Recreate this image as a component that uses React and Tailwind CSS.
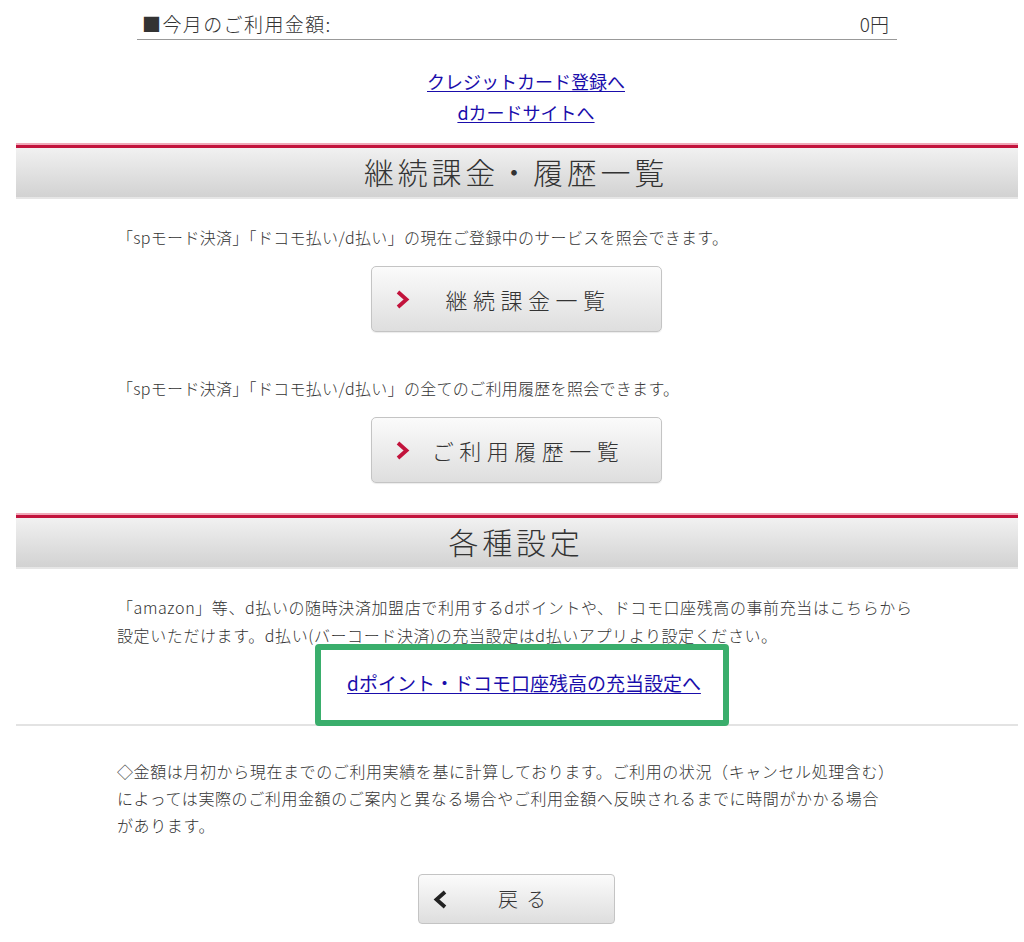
import React from "react";

const jp = { fontFamily: '"Noto Sans CJK JP", "Noto Sans", sans-serif' };

// 見出しバー（赤線＋グレーのグラデーション）
const SectionHeader = ({ title }) => (
    <div className="mx-4 mr-[6px]">
        <div className="h-[2px] bg-[#f0a8b8]" />
        <div className="h-[3px] bg-[#c2133c]" />
        <div className="h-[49px] bg-gradient-to-b from-[#f1f1f1] to-[#d2d2d2] flex items-center justify-center">
            <h2 className="text-[30px] leading-none text-[#333] font-light tracking-[3.8px] pb-[4px] pr-[2px]">{title}</h2>
        </div>
        <div className="h-[2px] bg-[#e6e6e6]" />
    </div>
);

const Chevron = ({ dir = "right", color }) => (
    <svg width="15" height="19" viewBox="0 0 15 19" className="shrink-0">
        <path
            d={dir === "right" ? "M3 2 L11.5 9.5 L3 17" : "M12 2 L3.5 9.5 L12 17"}
            fill="none"
            stroke={color}
            strokeWidth="3.8"
            strokeLinejoin="miter"
        />
    </svg>
);

const GrayButton = ({ label }) => (
    <div className="flex justify-center pl-[8px]">
        <button className="w-[291px] h-[66px] rounded-[5px] border border-[#c4c4c4] bg-gradient-to-b from-[#fbfbfb] to-[#dedede] flex items-center pl-[23px] shadow-[0_1px_1px_rgba(0,0,0,0.08)]">
            <Chevron color="#c2133c" />
            <span className="flex-1 text-center pr-[14px] text-[22px] text-[#333] font-light tracking-[5.5px]">{label}</span>
        </button>
    </div>
);

export default function App() {
    return (
        <div className="w-[1024px] min-h-[942px] bg-white text-[#333] font-light" style={jp}>
            {/* 今月のご利用金額 */}
            <div className="mx-[137px] mr-[127px] pt-[8px] border-b border-[#999] flex justify-between items-center h-[40px] text-[19px] leading-none">
                <span className="pl-[5px] tracking-[1.4px]">■今月のご利用金額:</span>
                <span className="pr-[8px]">0円</span>
            </div>

            <div className="flex flex-col items-center pt-[30px] gap-[9px] text-[18px] leading-[22px] pl-[28px] font-normal">
                <a href="#" className="text-[#1a0dab] underline underline-offset-2">クレジットカード登録へ</a>
                <a href="#" className="text-[#1a0dab] underline underline-offset-2">dカードサイトへ</a>
            </div>

            <div className="pt-[20px]">
                <SectionHeader title="継続課金・履歴一覧" />
            </div>

            <p className="pl-[117px] pt-[27px] text-[16px] leading-[22px] tracking-[0.3px]">
                「spモード決済」「ドコモ払い/d払い」の現在ご登録中のサービスを照会できます。
            </p>
            <div className="pt-[18px]">
                <GrayButton label="継続課金一覧" />
            </div>

            <p className="pl-[117px] pt-[45px] text-[16px] leading-[22px] tracking-[0.3px]">
                「spモード決済」「ドコモ払い/d払い」の全てのご利用履歴を照会できます。
            </p>
            <div className="pt-[18px]">
                <GrayButton label="ご利用履歴一覧" />
            </div>

            <div className="pt-[30px]">
                <SectionHeader title="各種設定" />
            </div>

            <p className="pl-[117px] pr-[60px] pt-[24px] text-[16px] leading-[28px] tracking-[0.6px]">
                「amazon」等、d払いの随時決済加盟店で利用するdポイントや、ドコモ口座残高の事前充当はこちらから
                <br />
                設定いただけます。d払い(バーコード決済)の充当設定はd払いアプリより設定ください。
            </p>

            <div className="relative mt-[-5px] h-[80px] flex items-center justify-center">
                <a href="#" className="text-[#1a0dab] underline underline-offset-2 text-[19px] leading-none pl-[24px] pb-[4px] font-normal">
                    dポイント・ドコモ口座残高の充当設定へ
                </a>
                <div className="absolute left-[315px] top-0 w-[414px] h-[82px] border-[6px] border-[#3aae6c] rounded-[4px]" />
            </div>
            <div className="mx-4 mr-[6px] h-[2px] bg-[#e3e3e3]" />

            <p className="pl-[117px] pr-[60px] pt-[32px] text-[16px] leading-[27px] tracking-[0.6px]">
                ◇金額は月初から現在までのご利用実績を基に計算しております。ご利用の状況（キャンセル処理含む）
                <br />
                によっては実際のご利用金額のご案内と異なる場合やご利用金額へ反映されるまでに時間がかかる場合
                <br />
                があります。
            </p>

            <div className="flex justify-center pt-[35px] pb-[18px] pl-[9px]">
                <button className="w-[197px] h-[50px] rounded-[4px] border border-[#c4c4c4] bg-gradient-to-b from-[#fbfbfb] to-[#dedede] flex items-center pl-[14px]">
                    <Chevron dir="left" color="#222" />
                    <span className="flex-1 text-center pr-[10px] text-[20px] text-[#333] font-light tracking-[8px]">戻る</span>
                </button>
            </div>
        </div>
    );
}
